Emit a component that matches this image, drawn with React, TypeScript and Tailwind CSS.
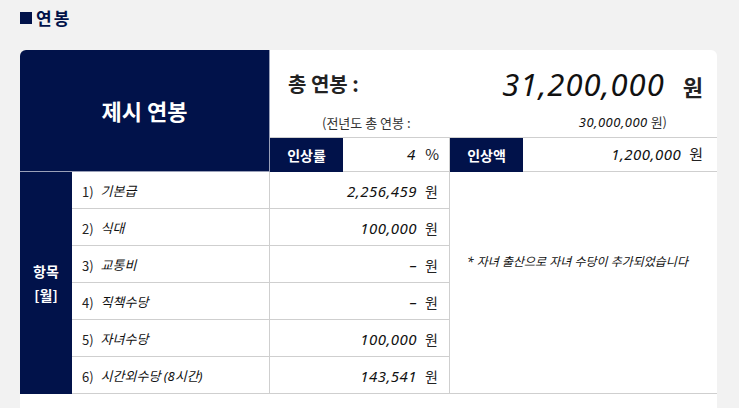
const navy = "bg-[#01124a]";

const items = [
  { no: "1)", label: "기본급", value: "2,256,459" },
  { no: "2)", label: "식대", value: "100,000" },
  { no: "3)", label: "교통비", value: "–" },
  { no: "4)", label: "직책수당", value: "–" },
  { no: "5)", label: "자녀수당", value: "100,000" },
  { no: "6)", label: "시간외수당 (8시간)", value: "143,541" },
];

const hand = "italic font-normal text-[#111] [font-family:'Noto_Sans','Noto_Sans_CJK_KR',sans-serif]";

export default function App() {
  return (
    <div className="min-h-screen bg-[#f2f2f2] px-5 pt-[8px] text-[#222] [font-family:'Noto_Sans_CJK_KR','Noto_Sans',sans-serif]">
      <h2 className="flex items-center gap-[4px] text-[17px] font-bold leading-5 tracking-[2px] text-[#01124a]">
        <span className="inline-block h-[12px] w-[12px] bg-[#01124a]" />
        연봉
      </h2>

      <div className="mt-[22px] w-[697px] overflow-hidden rounded-t-[6px] bg-white pb-6">
        {/* top */}
        <div className="grid grid-cols-[250px_1fr]">
          <div className={`${navy} flex h-[122px] items-center justify-center border-r border-b border-[#9aa0b8] text-[22px] font-bold text-white`}>
            제시 연봉
          </div>
          <div className="flex flex-col">
            <div className="h-[88px] border-b border-[#cfcfcf] pl-[18px] pr-[14px] pt-[6px]">
              <div className="flex h-[56px] items-center justify-between">
                <span className="text-[20px] font-bold">총 연봉 :</span>
                <span className="flex items-baseline gap-[18px]">
                  <span className={`${hand} text-[31px] tracking-[1px]`}>31,200,000</span>
                  <span className="text-[22px] font-bold">원</span>
                </span>
              </div>
              <div className="flex items-center justify-between pl-[34px] pr-[36px] text-[13px] text-[#333]">
                <span>(전년도 총 연봉 :</span>
                <span>
                  <span className={`${hand} tracking-[0.5px]`}>30,000,000</span> 원)
                </span>
              </div>
            </div>
            <div className="grid h-[34px] grid-cols-[73px_107px_73px_1fr]">
              <div className={`${navy} flex items-center justify-center text-[14px] font-bold text-white`}>인상률</div>
              <div className="flex items-center justify-end gap-[10px] border-r border-b border-[#cfcfcf] pr-[10px] text-[15px]">
                <span className={hand}>4</span>
                <span>%</span>
              </div>
              <div className={`${navy} flex items-center justify-center text-[14px] font-bold text-white`}>인상액</div>
              <div className="flex items-center justify-end gap-[8px] border-b border-[#cfcfcf] pr-[14px] text-[15px]">
                <span className={`${hand} tracking-[0.5px]`}>1,200,000</span>
                <span>원</span>
              </div>
            </div>
          </div>
        </div>

        {/* items */}
        <div className="grid grid-cols-[52px_198px_180px_1fr]">
          <div className={`${navy} flex flex-col items-center justify-center gap-[4px] text-[14px] font-bold leading-5 text-white`}>
            <span>항목</span>
            <span>[월]</span>
          </div>
          <div className="flex flex-col border-r border-[#cfcfcf]">
            {items.map((it) => (
              <div key={it.no} className="flex h-[37px] items-center gap-[7px] border-b border-[#cfcfcf] pl-[10px] pt-[3px] text-[13px]">
                <span>{it.no}</span>
                <span className={hand}>{it.label}</span>
              </div>
            ))}
          </div>
          <div className="flex flex-col border-r border-[#cfcfcf]">
            {items.map((it) => (
              <div key={it.no} className="flex h-[37px] items-center justify-end gap-[8px] border-b border-[#cfcfcf] pr-[11px] pt-[2px] text-[15px]">
                <span className={`${hand} tracking-[0.5px]`}>{it.value}</span>
                <span className="text-[14px]">원</span>
              </div>
            ))}
          </div>
          <div className="flex items-center border-b border-[#cfcfcf] pb-[42px] pl-[17px]">
            <span className={`${hand} text-[12px]`}>* 자녀 출산으로 자녀 수당이 추가되었습니다</span>
          </div>
        </div>
      </div>
    </div>
  );
}
